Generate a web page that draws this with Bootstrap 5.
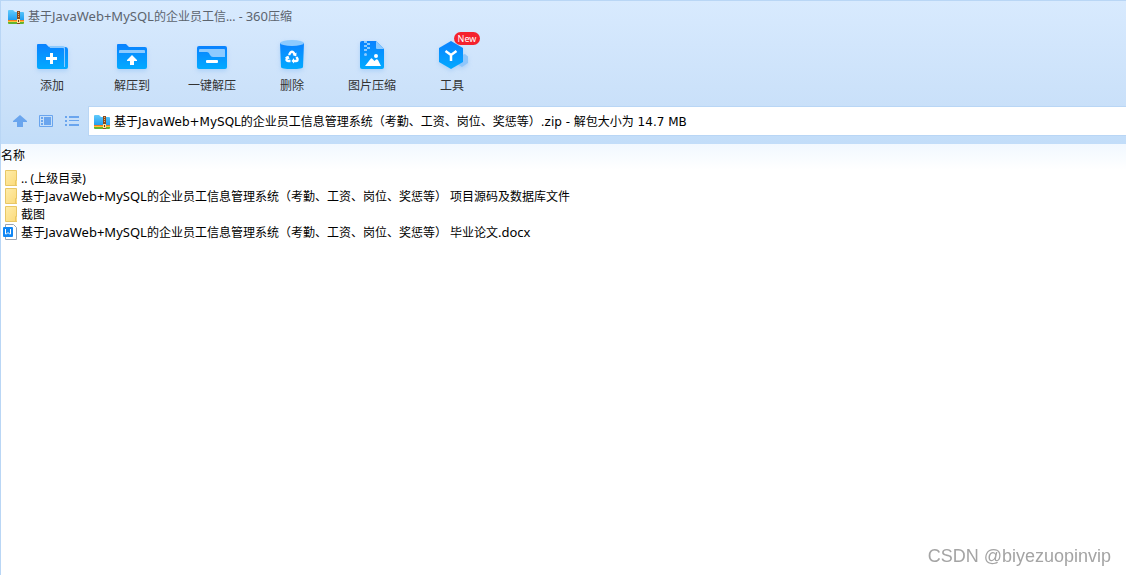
<!DOCTYPE html>
<html lang="zh-CN">
<head>
<meta charset="utf-8">
<meta name="viewport" content="width=device-width, initial-scale=1">
<title>360压缩</title>
<link href="https://cdn.jsdelivr.net/npm/bootstrap@5.3.0/dist/css/bootstrap.min.css" rel="stylesheet">
<style>
body{font:12px/18px "Noto Sans","Noto Sans CJK SC",sans-serif;color:#000;background:#fff}
.ltn{font-size:13px;line-height:1}
.app-window{border-left:1px solid #b9d6f5}
.app-head{background:linear-gradient(#d8eafe,#c9e0f9 75%,#c2ddf9);border-top:1px solid #b9d6f5}
.title-bar{height:31px;color:#5c646e;padding-left:7px}
.tools{padding-left:11px;height:74px}
.tool{width:80px;border:0;background:none;padding:7px 0 0;color:#333;line-height:18px;position:relative}
.tool svg{display:block;margin:0 auto 6px;filter:drop-shadow(0 2px 2px #8fc0f588)}
.new-tag{position:absolute;left:42px;top:0;width:26px;height:13px;border-radius:7px;background:#f5222d;color:#fff;font-size:9px;line-height:13px}
.nav-icon{border:0;background:none;padding:0 0 2px;width:26px;height:28px}
.address{border:1px solid #b9d6f5;border-right:0;background:#fff;height:30px;padding-left:5px;margin-left:3px}
.address input{border:0;outline:0;padding:2px 0 0;background:none;color:#000;font-family:"DejaVu Sans","Noto Sans CJK SC",sans-serif}
.address-row{padding:0 0 8px 6px}
.col-head{background:linear-gradient(#f1f8ff,#fff);height:26px;font-weight:400;padding:3px 0 0;line-height:18px;vertical-align:top}
.files td{height:18px;padding:0;line-height:18px}
.files a{color:#000;text-decoration:none;padding-left:2px;height:18px}
.files svg{margin-top:-2px}
.watermark{right:15px;bottom:5px;font:18px/28px "Liberation Sans",sans-serif;color:#a4a4a4}
</style>
</head>
<body>
<svg width="0" height="0" class="position-absolute" aria-hidden="true">
<defs>
<linearGradient id="blue" x1="0" y1="0" x2="0" y2="1"><stop stop-color="#0a82ff"/><stop offset="1" stop-color="#02aaff"/></linearGradient>
<linearGradient id="sky" x1="0" y1="0" x2="0" y2="1"><stop stop-color="#62cbfb"/><stop offset="1" stop-color="#219df0"/></linearGradient>
<linearGradient id="gold" x1="0" y1="0" x2="1" y2="1"><stop stop-color="#ffedaa"/><stop offset="1" stop-color="#fbd978"/></linearGradient>
<symbol id="zip" viewBox="0 0 16 15">
<path d="M0 2q0-1 1-1h4l2 2h8q1 0 1 1v7H0z" fill="url(#sky)"/><path d="M0 11h16v1H0z" fill="#f17b20"/><path d="M0 12h16v1H0z" fill="#ffc33a"/><path d="M0 13h16v1q0 1-1 1H1q-1 0-1-1z" fill="#63b32e"/>
<path d="M9 2h3v13H9z" fill="#8b4a1c"/><path d="M10 3h1v1h-1zm0 2h1v1h-1zm0 2h1v1h-1z" fill="#e9b36c"/><path d="M9 10h3v4H9z" fill="#ffe39a"/><path d="M10 11h1v2h-1z" fill="#6b3715"/>
</symbol>
<symbol id="folder" viewBox="0 0 16 16"><path d="M2.500.5h11v10h1v5h-12z" fill="url(#gold)" stroke="#e8c766"/><path d="M12.500 15v-4.500h1" fill="none" stroke="#e8c766"/></symbol>
</defs></svg>

<div class="app-window min-vh-100">
<header class="app-head">
<div class="title-bar d-flex align-items-center gap-1"><svg width="16" height="15"><use href="#zip"/></svg><span>基于<span class="ltn">JavaWeb+MySQL</span>的企业员工信... - <span class="ltn">360</span>压缩</span></div>
<div class="tools d-flex align-items-start">
<button class="tool"><svg width="32" height="32" viewBox="0 0 32 32"><path d="M1 6q0-1 1-1h8l3 3h16q3 0 3 3v17q0 2-2 2H3q-2 0-2-2z" fill="url(#blue)"/><path d="M13 7h14q2 0 2 2v19h-1V10q0-1-1-1H14z" fill="#8ccaff"/><path d="M14 14h3v4h4v3h-4v4h-3v-4h-4v-3h4z" fill="#fff"/></svg>添加</button>
<button class="tool"><svg width="32" height="32" viewBox="0 0 32 32"><path d="M1 6q0-1 1-1h8l3 3h16q2 0 2 2v18q0 2-2 2H3q-2 0-2-2z" fill="url(#blue)"/><path d="M3 14v-2q0-1 1-1h24q1 0 1 1v2z" fill="#8ccaff"/><path d="m16 16 5 5v1h-3v4h-4v-4h-3v-1z" fill="#fff"/></svg>解压到</button>
<button class="tool"><svg width="32" height="32" viewBox="0 0 32 32"><rect x="1" y="7" width="30" height="23" rx="2" fill="url(#blue)"/><path d="M3 11q0-1 1-1h24q1 0 1 1v7H17q-2 0-3-2-1-3-3-3H3z" fill="#8ccaff"/><rect x="10" y="21" width="12" height="3" rx="1" fill="#fff"/></svg>一键解压</button>
<button class="tool"><svg width="32" height="32" viewBox="0 0 32 32"><path d="M4 4h24l-1 24q0 2-11 2T5 28z" fill="url(#blue)"/><ellipse cx="16" cy="4" rx="12" ry="3" fill="#8ccaff"/><g fill="none" stroke="#fff" stroke-width="2.400"><path d="m13 16 1.500-2.500q1.500-1.500 3 0L19 16"/><path d="m20.500 18 1 1.800q.4 2.200-1.500 2.200h-3"/><path d="M14.500 22H12q-2-.2-1.300-2.200L12 18"/></g><path d="m20.500 13.500-.2 4-3.800-1.500zM18 19v5.500L15.500 22zM8.800 18.500l3.600-2 1.200 3.700z" fill="#fff"/></svg>删除</button>
<button class="tool"><svg width="32" height="32" viewBox="0 1 32 32"><path d="M6 3h14l8 8v18q0 2-2 2H6q-2 0-2-2V5q0-2 2-2z" fill="url(#blue)"/><path d="M20 3l8 8h-7q-1 0-1-1z" fill="#8ccaff"/><path d="M8 3h3v2h3v2h-3v2h3v2h-3v2H8v-2h3V9H8V7h3V5H8z" fill="#8ccaff"/><circle cx="9.500" cy="16.500" r="1.500" fill="#8ccaff"/><path d="m9 28 5.500-7q1-1.300 2 0l2 2 1.500-1.500q1-.8 2 .5l3 6z" fill="#fff"/><circle cx="20" cy="18" r="2" fill="#fff"/></svg>图片压缩</button>
<button class="tool"><svg width="32" height="32" viewBox="0 1 32 32"><path d="m26 17 3-1 3 2.500v6.500l-6 4-5-3z" fill="#8fc6fb"/><path d="M15 3l12 7v14l-12 7-12-7V10z" fill="url(#blue)"/><path d="m9.500 13 5.500 4 5.500-4M15 17v6" fill="none" stroke="#fff" stroke-width="2.500"/></svg>工具<span class="new-tag">New</span></button>
</div>
<div class="address-row d-flex align-items-center">
<button class="nav-icon" aria-label="向上"><svg width="14" height="14"><path d="M7 1l7 6v1h-4v5H4V8H0V7z" fill="#6aa5ee"/></svg></button>
<button class="nav-icon" aria-label="图标"><svg width="14" height="14"><path d="M.5 1.500h13v11H.5z" fill="none" stroke="#6aa5ee"/><path d="M5 3h7v8H5zM2 3h2v2H2zm0 3h2v2H2zm0 3h2v2H2z" fill="#6aa5ee"/></svg></button>
<button class="nav-icon" aria-label="列表"><svg width="14" height="14"><path d="M0 2h2v2H0zm0 4h2v2H0zm0 4h2v2H0zM4 2h10v2H4zm0 4h10v1H4zm0 4h10v2H4z" fill="#6aa5ee"/></svg></button>
<div class="address d-flex align-items-center gap-1 flex-fill"><svg width="16" height="15"><use href="#zip"/></svg><input class="flex-fill" aria-label="地址" value="基于JavaWeb+MySQL的企业员工信息管理系统（考勤、工资、岗位、奖惩等）.zip - 解包大小为 14.7 MB"></div>
</div>
</header>
<main>
<table class="files w-100"><thead><tr><th class="col-head">名称</th></tr></thead>
<tbody>
<tr><td><a href="#" class="d-flex align-items-center"><svg class="me-1" width="14" height="16"><use href="#folder" width="16" height="16"/></svg><span>.. (上级目录)</span></a></td></tr>
<tr><td><a href="#" class="d-flex align-items-center"><svg class="me-1" width="14" height="16"><use href="#folder" width="16" height="16"/></svg><span>基于<span class="ltn">JavaWeb+MySQL</span>的企业员工信息管理系统（考勤、工资、岗位、奖惩等） 项目源码及数据库文件</span></a></td></tr>
<tr><td><a href="#" class="d-flex align-items-center"><svg class="me-1" width="14" height="16"><use href="#folder" width="16" height="16"/></svg><span>截图</span></a></td></tr>
<tr><td><a href="#" class="d-flex align-items-center"><svg class="me-1" width="14" height="16" viewBox="0 0 14 16"><path d="M2.500.5h8l3 3v12h-11z" fill="#fff" stroke="#9aa4b2"/><rect y="3" width="10" height="10" rx="1" fill="#1187f5"/><path d="M2.500 5v5h1L5 8.500 6.500 10h1V5" fill="none" stroke="#fff"/></svg><span>基于<span class="ltn">JavaWeb+MySQL</span>的企业员工信息管理系统（考勤、工资、岗位、奖惩等） 毕业论文<span class="ltn">.docx</span></span></a></td></tr>
</tbody></table>
</main>
</div>
<div class="watermark position-fixed">CSDN @biyezuopinvip</div>
<script src="https://cdn.jsdelivr.net/npm/bootstrap@5.3.0/dist/js/bootstrap.bundle.min.js"></script>
</body>
</html>
